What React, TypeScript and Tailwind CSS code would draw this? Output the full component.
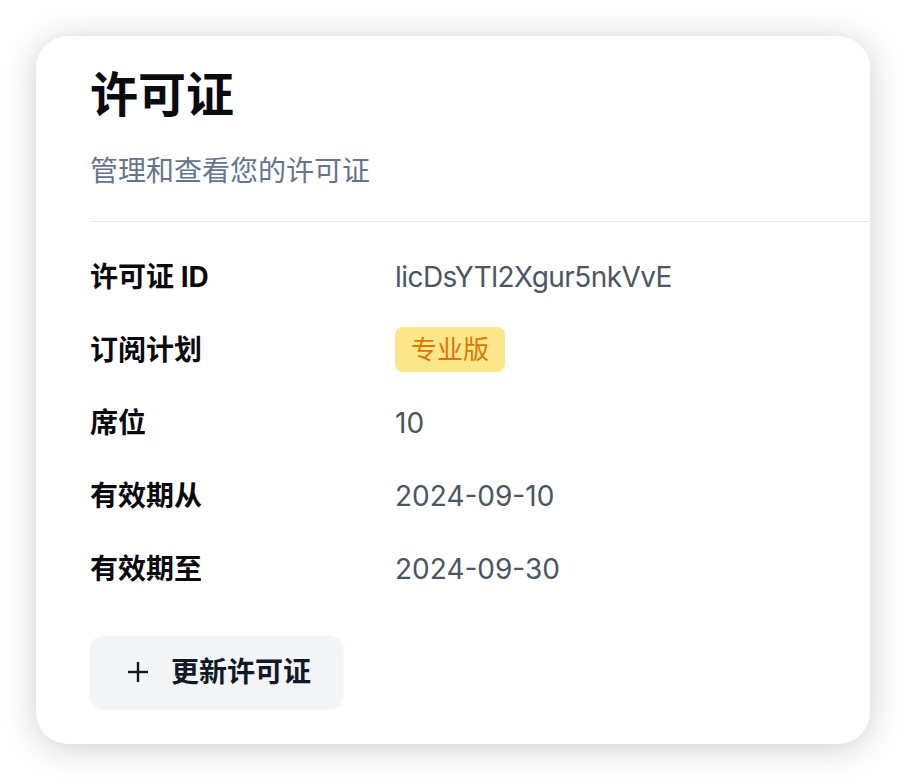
const rows = [
  { label: "许可证 ID", value: "licDsYTl2Xgur5nkVvE", tight: true },
  { label: "订阅计划", badge: "专业版" },
  { label: "席位", value: "10" },
  { label: "有效期从", value: "2024-09-10" },
  { label: "有效期至", value: "2024-09-30" },
];

const font = "font-['Inter','Noto_Sans_CJK_SC',sans-serif]";

const App = () => {
  return (
    <div className={`min-h-[780px] w-[906px] bg-white p-[36px] ${font}`}>
      <div className="flex h-[708px] w-[834px] flex-col rounded-[32px] bg-white pl-[54px] shadow-[0_4px_34px_rgba(0,0,0,0.2)]">
        <h1 className="mt-[35px] text-[48px] leading-[48px] font-bold text-[#0a0a0f]">
          许可证
        </h1>
        <p className="mt-[38px] text-[28px] leading-[28px] text-[#64748b]">
          管理和查看您的许可证
        </p>
        <div className="mt-[36px] h-px bg-[#e2e4e9]" />
        <div className="mt-[18px] flex flex-col">
          {rows.map((row) => (
            <div key={row.label} className="flex h-[73px] items-center">
              <div className="w-[305px] text-[28px] font-bold text-[#0a0a0f]">
                {row.label}
              </div>
              {row.badge ? (
                <span className="flex h-[45px] items-center rounded-[8px] bg-[#fde68a] px-[16px] text-[26px] text-[#d97706]">
                  {row.badge}
                </span>
              ) : (
                <div
                  className={
                    row.tight
                      ? "text-[28px] tracking-[-0.02em] text-[#4b5563]"
                      : "text-[28px] text-[#4b5563]"
                  }
                >
                  {row.value}
                </div>
              )}
            </div>
          ))}
        </div>
        <div className="mt-[31px]">
          <button className="flex h-[72px] items-center gap-[23px] rounded-[14px] bg-[#f3f4f6] pr-[32px] pl-[38px] text-[28px] font-semibold text-[#111827] shadow-[0_1px_3px_rgba(0,0,0,0.08)]">
            <svg width="20" height="20" viewBox="0 0 20 20" stroke="currentColor" strokeWidth="2.4" strokeLinecap="butt">
              <line x1="10" y1="0" x2="10" y2="20" />
              <line x1="0" y1="10" x2="20" y2="10" />
            </svg>
            更新许可证
          </button>
        </div>
      </div>
    </div>
  );
};

export default App;
